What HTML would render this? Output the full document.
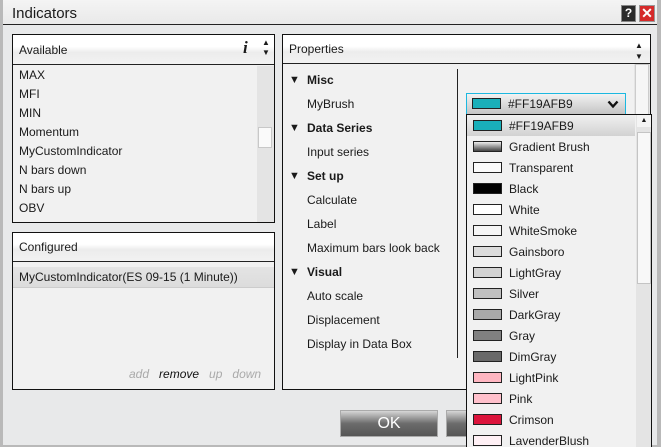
<!DOCTYPE html>
<html><head><meta charset="utf-8"><style>
*{box-sizing:border-box;margin:0;padding:0}
html,body{width:661px;height:447px;overflow:hidden}
body{background:#b9b9b9;font-family:"Liberation Sans",Arial,sans-serif;font-size:12px;color:#1a1a1a;position:relative}
.win{position:absolute;left:3px;top:0;width:654px;height:445px;background:#e8e9ea}
.abs{position:absolute}
.title{left:3px;top:0;width:654px;height:25px;border-bottom:1px solid #222;background:linear-gradient(#f4f4f4,#e9e9e9);font-size:15px;padding:5px 0 0 9px}
.panel{border:1px solid #111;background:#f1f1f1}
.hdr{background:linear-gradient(#fff 0,#fff 40%,#ececec 60%,#f2f2f2);border-bottom:1px solid #222}
.sw{position:absolute;width:29px;height:11px;border:1px solid #222}
.li{position:absolute;left:42px;font-size:12px}
</style></head><body>
<div class="win"></div>
<div class="abs title">Indicators</div>
<div class="abs" style="left:621px;top:5px;width:15px;height:17px;background:#2a2a2a;border:1px solid #888;color:#fff;font-weight:bold;font-size:12px;text-align:center;line-height:15px">?</div>
<div class="abs" style="left:639px;top:5px;width:16px;height:17px;background:#d52a2a;border:1px solid #999;color:#fff;font-weight:bold;font-size:14px;text-align:center;line-height:15px">✕</div>

<!-- Available -->
<div class="abs panel" style="left:12px;top:34px;width:263px;height:189px">
 <div class="hdr abs" style="left:0;top:0;width:261px;height:30px;padding:8px 0 0 6px">Available
  <span class="abs" style="left:230px;top:3px;font-family:'Liberation Serif',serif;font-style:italic;font-weight:bold;font-size:17px">i</span>
  <span class="abs" style="left:249px;top:3px;font-size:8px;line-height:10px">▲<br>▼</span></div>
 <div class="abs" style="left:244px;top:31px;width:17px;height:156px;background:#e4e4e4"></div>
 <div class="abs" style="left:245px;top:92px;width:14px;height:21px;background:#fafafa;border:1px solid #c8c8c8"></div>
 <div class="abs" style="left:6px;top:31px;line-height:19px">MAX<br>MFI<br>MIN<br>Momentum<br>MyCustomIndicator<br>N bars down<br>N bars up<br>OBV</div>
</div>

<!-- Configured -->
<div class="abs panel" style="left:12px;top:232px;width:263px;height:158px">
 <div class="hdr abs" style="left:0;top:0;width:261px;height:29px;padding:7px 0 0 6px">Configured</div>
 <div class="abs" style="left:0;top:34px;width:261px;height:21px;background:linear-gradient(#e4e4e4,#dcdcdc);border-bottom:1px solid #ccc;padding:3px 0 0 6px">MyCustomIndicator(ES 09-15 (1 Minute))</div>
 <div class="abs" style="left:116px;top:134px;font-style:italic;color:#aaa">add &nbsp;&nbsp;<span style="color:#111">remove</span> &nbsp;&nbsp;up &nbsp;&nbsp;down</div>
</div>

<!-- Properties -->
<div class="abs panel" style="left:282px;top:34px;width:369px;height:356px">
 <div class="hdr abs" style="left:0;top:0;width:367px;height:29px;padding:7px 0 0 6px">Properties
  <span class="abs" style="left:352px;top:5px;font-size:8px;line-height:11px">▲<br>▼</span></div>
 <div class="abs" style="left:351px;top:29px;width:16px;height:325px;background:#e4e4e4"></div>
 <div class="abs" style="left:352px;top:29px;width:14px;height:60px;background:#f6f6f6;border:1px solid #ccc"></div>
 <div class="abs" style="left:174px;top:34px;width:1px;height:289px;background:#222"></div>
 <div class="abs" style="left:6px;top:33px;line-height:24px;font-size:11px">▼<br><br>▼<br><br>▼<br><br><br><br>▼</div>
 <div class="abs" style="left:24px;top:33px;line-height:24px">
  <b>Misc</b><br>MyBrush<br><b>Data Series</b><br>Input series<br><b>Set up</b><br>Calculate<br>Label<br>Maximum bars look back<br><b>Visual</b><br>Auto scale<br>Displacement<br>Display in Data Box</div>
</div>

<!-- combobox -->
<div class="abs" style="left:466px;top:93px;width:160px;height:22px;border:1px solid #1cb8e0;background:linear-gradient(#f2f2f2,#c4c4c4);font-size:12px">
 <div class="sw" style="left:5px;top:4px;background:#19afb9"></div>
 <span class="abs" style="left:41px;top:3px">#FF19AFB9</span>
 <svg class="abs" style="left:140px;top:6px" width="12" height="9" viewBox="0 0 12 9"><path d="M1.5 1.5 L6 6.5 L10.5 1.5" stroke="#111" stroke-width="2.4" fill="none"/></svg>
</div>

<!-- dropdown list -->
<div class="abs" style="left:466px;top:114px;width:186px;height:340px;border:1px solid #111;background:#f1f1f1">
 <div class="abs" style="left:0;top:0;width:168px;height:21px;background:linear-gradient(#f0f0f0,#d2d2d2)"></div>
 <div class="abs" style="left:169px;top:0;width:15px;height:340px;background:#e4e4e4"></div>
 <div class="abs" style="left:170px;top:0;width:14px;height:12px;background:#f4f4f4;font-size:7px;text-align:center;line-height:11px">▲</div>
 <div class="abs" style="left:170px;top:17px;width:14px;height:152px;background:#f8f8f8;border:1px solid #c4c4c4"></div>
 <div class="sw" style="left:6px;top:5px;background:#19afb9"></div><span class="li" style="top:4px">#FF19AFB9</span>
 <div class="sw" style="left:6px;top:26px;background:linear-gradient(#eee,#444)"></div><span class="li" style="top:25px">Gradient Brush</span>
 <div class="sw" style="left:6px;top:47px;background:#fafafa"></div><span class="li" style="top:46px">Transparent</span>
 <div class="sw" style="left:6px;top:68px;background:#000"></div><span class="li" style="top:67px">Black</span>
 <div class="sw" style="left:6px;top:89px;background:#fff"></div><span class="li" style="top:88px">White</span>
 <div class="sw" style="left:6px;top:110px;background:#f5f5f5"></div><span class="li" style="top:109px">WhiteSmoke</span>
 <div class="sw" style="left:6px;top:131px;background:#dcdcdc"></div><span class="li" style="top:130px">Gainsboro</span>
 <div class="sw" style="left:6px;top:152px;background:#d3d3d3"></div><span class="li" style="top:151px">LightGray</span>
 <div class="sw" style="left:6px;top:173px;background:#c0c0c0"></div><span class="li" style="top:172px">Silver</span>
 <div class="sw" style="left:6px;top:194px;background:#a9a9a9"></div><span class="li" style="top:193px">DarkGray</span>
 <div class="sw" style="left:6px;top:215px;background:#808080"></div><span class="li" style="top:214px">Gray</span>
 <div class="sw" style="left:6px;top:236px;background:#696969"></div><span class="li" style="top:235px">DimGray</span>
 <div class="sw" style="left:6px;top:257px;background:#ffb6c1"></div><span class="li" style="top:256px">LightPink</span>
 <div class="sw" style="left:6px;top:278px;background:#ffc0cb"></div><span class="li" style="top:277px">Pink</span>
 <div class="sw" style="left:6px;top:299px;background:#dc143c"></div><span class="li" style="top:298px">Crimson</span>
 <div class="sw" style="left:6px;top:320px;background:#fff0f5"></div><span class="li" style="top:319px">LavenderBlush</span>
</div>

<!-- buttons -->
<div class="abs" style="left:340px;top:410px;width:98px;height:27px;border:1px solid #aaa;background:linear-gradient(#d6d6d6,#6c6c6c 50%,#555);color:#fff;font-size:16px;text-align:center;line-height:25px">OK</div>
<div class="abs" style="left:446px;top:410px;width:20px;height:27px;border:1px solid #aaa;border-right:none;background:linear-gradient(#d6d6d6,#6c6c6c 50%,#555)"></div>
</body></html>
